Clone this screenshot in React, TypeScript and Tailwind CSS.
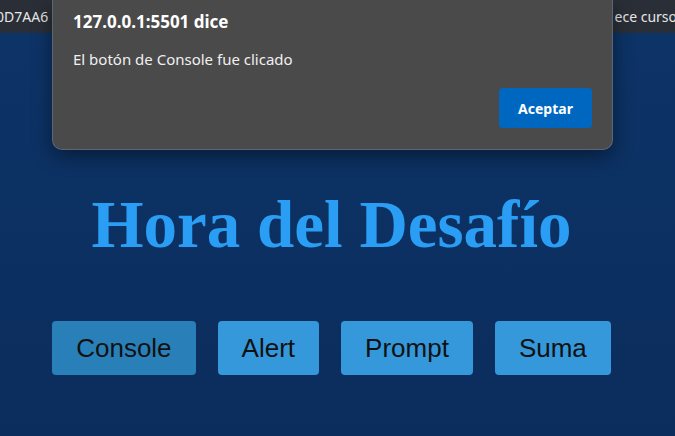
import React from 'react';

const buttons = ['Console', 'Alert', 'Prompt', 'Suma'];

export default function App() {
    return (
        <div className="relative w-[675px] h-[436px] overflow-hidden bg-gradient-to-b from-[#0d3468] to-[#0b2d5d]">
            {/* barra superior */}
            <div className="h-[33px] bg-[#2a2f37] flex items-center justify-between text-[14px] text-[#e6e6e6] font-['Noto_Sans',sans-serif]">
                <span className="-ml-[4px]">0D7AA6</span>
                <span className="-mr-[2px]">ece curso</span>
            </div>

            <div className="pr-[12px]">
                <h1 className="mt-[158px] text-center text-[67px] leading-none font-bold text-[#2a9ef5] font-['Liberation_Serif',serif]">
                    Hora del Desafío
                </h1>
                <div className="mt-[63px] flex justify-center gap-[22px]">
                    {buttons.map((b, i) => (
                        <button
                            key={b}
                            className={`h-[54px] px-[24px] rounded-[4px] text-[26px] text-[#111] font-['Liberation_Sans',Arial,sans-serif] ${
                                i === 0 ? 'bg-[#2980b9]' : 'bg-[#3498db]'
                            }`}
                        >
                            {b}
                        </button>
                    ))}
                </div>
            </div>

            {/* dialogo alert */}
            <div className="absolute left-[52px] top-0 w-[561px] h-[150px] bg-[#4a4a4a] rounded-b-[10px] border border-t-0 border-[#5b6678] shadow-[0_6px_20px_rgba(0,0,0,0.45)] font-['Noto_Sans',sans-serif]">
                <div className="pl-[20px] pt-[9px] text-[17px] font-bold text-white">127.0.0.1:5501 dice</div>
                <div className="pl-[20px] mt-[13px] text-[15px] text-[#f0f0f0]">El botón de Console fue clicado</div>
                <div className="flex justify-end pr-[20px] mt-[18px]">
                    <button className="w-[93px] h-[40px] rounded-[4px] bg-[#0067c0] text-white text-[14px] font-bold">
                        Aceptar
                    </button>
                </div>
            </div>
        </div>
    );
}
